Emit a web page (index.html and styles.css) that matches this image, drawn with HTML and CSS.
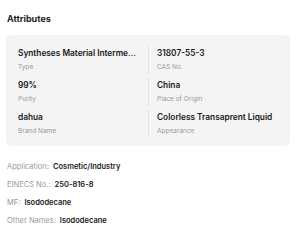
FILE: index.html
```html
<!DOCTYPE html>
<html lang="en">
<head>
  <meta charset="UTF-8" />
  <meta name="viewport" content="width=device-width, initial-scale=1" />
  <title>Attributes</title>
  <link rel="stylesheet" href="styles.css">
</head>
<body>
<div class="attrs">
  <h3 class="attrs-title">Attributes</h3>

  <!-- Key attributes, two per row -->
  <div class="attr-card">
    <div class="attr-cell">
      <div class="attr-value">Syntheses Material Intermediates</div>
      <div class="attr-label">Type</div>
    </div>
    <div class="attr-cell">
      <div class="attr-value">31807-55-3</div>
      <div class="attr-label">CAS No.</div>
    </div>
    <div class="attr-cell">
      <div class="attr-value">99%</div>
      <div class="attr-label">Purity</div>
    </div>
    <div class="attr-cell">
      <div class="attr-value">China</div>
      <div class="attr-label">Place of Origin</div>
    </div>
    <div class="attr-cell">
      <div class="attr-value">dahua</div>
      <div class="attr-label">Brand Name</div>
    </div>
    <div class="attr-cell">
      <div class="attr-value">Colorless Transaprent Liquid</div>
      <div class="attr-label">Appearance</div>
    </div>
  </div>

  <!-- Other attributes -->
  <ul class="attr-list">
    <li><span class="attr-key">Application:</span><span class="attr-val">Cosmetic/Industry</span></li>
    <li><span class="attr-key">EINECS No.:</span><span class="attr-val">250-816-8</span></li>
    <li><span class="attr-key">MF:</span><span class="attr-val">Isododecane</span></li>
    <li><span class="attr-key">Other Names:</span><span class="attr-val">Isododecane</span></li>
  </ul>
</div>
</body>
</html>
```

FILE: styles.css
```css
* {
  margin: 0;
  padding: 0;
  box-sizing: border-box;
}

body {
  font-family: Inter, 'Liberation Sans', sans-serif;
  background: #fff;
  color: #222;
}

.attrs {
  padding: 13px 10px 0 6px;
}

.attrs-title {
  font-size: 9px;
  line-height: 12px;
  font-weight: 700;
  color: #222;
  margin-left: 1px;
  margin-bottom: 10px;
}

.attr-card {
  background: #f4f4f4;
  border-radius: 6px;
  padding: 11px 8px 9px 12px;
  display: grid;
  grid-template-columns: 130px 1fr;
  row-gap: 5px;
}

.attr-cell {
  min-width: 0;
  padding-right: 10px;
}

.attr-cell:nth-child(even) {
  border-left: 1px solid #e2e2e2;
  padding-left: 8px;
  padding-right: 0;
}

.attr-value {
  font-size: 8.3px;
  line-height: 14px;
  font-weight: 600;
  color: #1a1a1a;
  white-space: nowrap;
  overflow: hidden;
  text-overflow: ellipsis;
}

.attr-label {
  font-size: 6.5px;
  line-height: 12px;
  margin-top: 1px;
  color: #9a9a9a;
}

.attr-list {
  list-style: none;
  margin-top: 15px;
  margin-left: 1px;
  display: flex;
  flex-direction: column;
  gap: 6px;
}

.attr-list li {
  font-size: 7.5px;
  line-height: 12px;
  display: flex;
  gap: 4px;
}

.attr-key {
  color: #999;
}

.attr-val {
  font-weight: 600;
  color: #1a1a1a;
}
```
